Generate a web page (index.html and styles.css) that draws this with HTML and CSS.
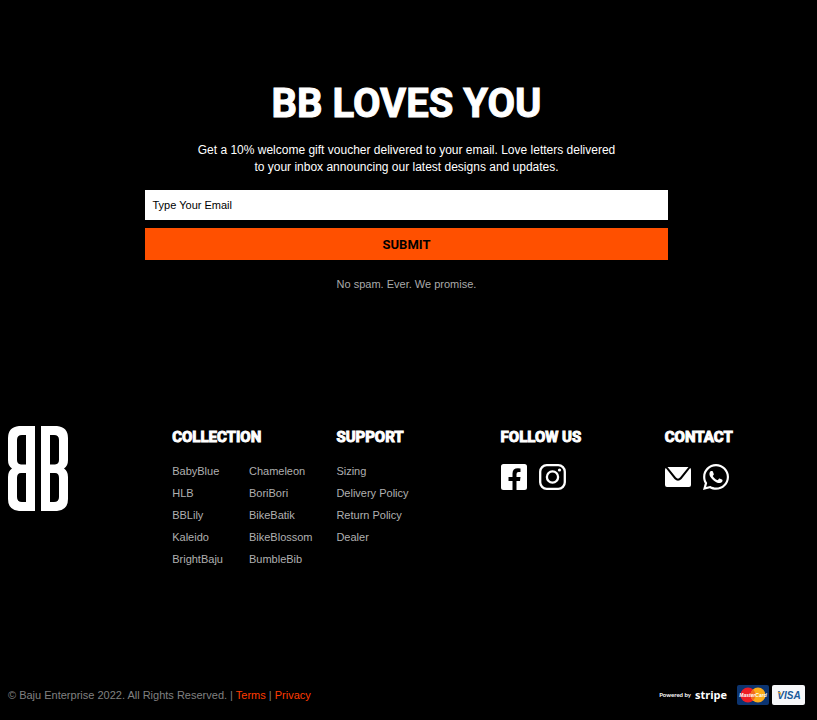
FILE: index.html
```html
<!DOCTYPE html>
<html lang="en">
<head>
<meta charset="utf-8">
<meta name="viewport" content="width=device-width, initial-scale=1">
<title>BB Loves You</title>
<link rel="stylesheet" href="styles.css">
</head>
<body>
<main class="newsletter">
  <h1 class="newsletter-title">BB LOVES YOU</h1>
  <p class="newsletter-lead">Get a 10% welcome gift voucher delivered to your email. Love letters delivered to your inbox announcing our latest designs and updates.</p>
  <form class="newsletter-form">
    <input class="field" type="email" placeholder="Type Your Email" aria-label="Type Your Email">
    <button class="submit" type="submit">SUBMIT</button>
  </form>
  <p class="newsletter-note">No spam. Ever. We promise.</p>
</main>
<footer class="footer">
  <div class="columns">
    <a class="logo" href="#" aria-label="BB">
      <svg width="60" height="85" viewBox="0 0 60 85" fill="#fff" fill-rule="evenodd">
        <path d="M27 0H11Q0 1 0 12V34Q0 40 4 42.500Q0 45 0 51V73Q0 84 11 85H27ZM18 9V38.500H13Q9 38 9 34V14Q9 9 14 9ZM18 47V76H14Q9 76 9 71V52Q9 47 13 47Z"/>
        <path d="M33 0H49Q60 1 60 12V34Q60 40 56 42.500Q60 45 60 51V73Q60 84 49 85H33ZM42 9V38.500H47Q51 38 51 34V14Q51 9 46 9ZM42 47V76H46Q51 76 51 71V52Q51 47 47 47Z"/>
      </svg>
    </a>
    <section>
      <h2 class="heading">COLLECTION</h2>
      <div class="link-groups">
        <ul class="links">
          <li><a href="#">BabyBlue</a></li>
          <li><a href="#">HLB</a></li>
          <li><a href="#">BBLily</a></li>
          <li><a href="#">Kaleido</a></li>
          <li><a href="#">BrightBaju</a></li>
        </ul>
        <ul class="links">
          <li><a href="#">Chameleon</a></li>
          <li><a href="#">BoriBori</a></li>
          <li><a href="#">BikeBatik</a></li>
          <li><a href="#">BikeBlossom</a></li>
          <li><a href="#">BumbleBib</a></li>
        </ul>
      </div>
    </section>
    <section>
      <h2 class="heading">SUPPORT</h2>
      <ul class="links">
        <li><a href="#">Sizing</a></li>
        <li><a href="#">Delivery Policy</a></li>
        <li><a href="#">Return Policy</a></li>
        <li><a href="#">Dealer</a></li>
      </ul>
    </section>
    <section>
      <h2 class="heading">FOLLOW US</h2>
      <div class="icons">
        <a href="#" aria-label="Facebook">
          <svg width="26" height="26" viewBox="0 0 26 26"><path fill="#fff" d="M2.500 0H23.500Q26 0 26 2.500V23.500Q26 26 23.500 26H15.500V17H19L19.500 13H15.500V10Q15.500 8 17.500 8H19.500V4.500Q18.500 4.200 17 4.200Q11.500 4.200 11.500 9.500V13H7.500V17H11.500V26H2.500Q0 26 0 23.500V2.500Q0 0 2.500 0Z"/></svg>
        </a>
        <a href="#" aria-label="Instagram">
          <svg width="27" height="26" viewBox="0 0 27 26" fill="none" stroke="#fff" stroke-width="2.300"><rect x="1.200" y="1.200" width="24.600" height="23.600" rx="6.500"/><circle cx="13.500" cy="13" r="5.600"/><circle cx="20.500" cy="6" r="1.600" fill="#fff" stroke="none"/></svg>
        </a>
      </div>
    </section>
    <section>
      <h2 class="heading">CONTACT</h2>
      <div class="icons">
        <a href="#" aria-label="Email">
          <svg width="26" height="26" viewBox="0 0 26 26" fill="#fff"><path d="M2.500 3H23.500L15 13.500Q13 15.800 11 13.500ZM.8 4L9.500 15Q13 18.600 16.500 15L25.200 4Q26 4.500 26 6V21Q26 23 24 23H2Q0 23 0 21V6Q0 4.500 .8 4Z"/></svg>
        </a>
        <a href="#" aria-label="WhatsApp">
          <svg width="26" height="26" viewBox="0 0 448 448"><path fill="#fff" d="M380.900 65.100C339 23.100 283.200 0 223.900 0 101.500 0 1.900 99.600 1.900 222c0 39.100 10.200 77.300 29.600 111L0 448l117.700-30.900c32.400 17.700 68.900 27 106.100 27h.1c122.300 0 224.100-99.600 224.100-222 0-59.300-25.200-115-67.100-157zM223.900 406.700c-33.200 0-65.700-8.900-94-25.700l-6.700-4-69.800 18.300L72 327.200l-4.400-7C49.100 290.800 39.400 256.900 39.400 222c0-101.700 82.800-184.500 184.600-184.500 49.300 0 95.600 19.200 130.400 54.100 34.800 34.900 56.200 81.200 56.100 130.500 0 101.800-84.900 184.600-186.600 184.600zm101.200-138.200c-5.500-2.800-32.800-16.200-37.900-18-5.100-1.900-8.800-2.800-12.500 2.800-3.700 5.600-14.300 18-17.600 21.800-3.200 3.700-6.500 4.200-12 1.400-32.600-16.300-54-29.100-75.500-66-5.700-9.800 5.700-9.100 16.300-30.300 1.800-3.700.9-6.900-.5-9.700-1.400-2.800-12.500-30.100-17.100-41.200-4.500-10.800-9.100-9.300-12.500-9.500-3.200-.2-6.900-.2-10.600-.2-3.700 0-9.700 1.400-14.800 6.900-5.100 5.600-19.400 19-19.400 46.300 0 27.300 19.900 53.700 22.600 57.400 2.800 3.700 39.100 59.700 94.800 83.800 35.200 15.200 49 16.500 66.600 13.900 10.700-1.600 32.800-13.400 37.400-26.400 4.600-13 4.600-24.100 3.200-26.400-1.300-2.500-5-3.900-10.500-6.600z"/></svg>
        </a>
      </div>
    </section>
  </div>
  <div class="bottom">
    <p class="legal">© Baju Enterprise 2022. All Rights Reserved. | <a href="#">Terms</a> | <a href="#">Privacy</a></p>
    <div class="payments">
      <span class="powered">Powered by</span>
      <span class="stripe">stripe</span>
      <svg class="card" width="32" height="20" viewBox="0 0 32 20" role="img" aria-label="MasterCard">
        <rect width="32" height="20" rx="2" fill="#0c3470"/>
        <circle cx="11" cy="10" r="7.500" fill="#ed1c24"/>
        <circle cx="21" cy="10" r="7.500" fill="#fbab18"/>
        <path d="M16 4.400A7.500 7.500 0 0 1 16 15.600A7.500 7.500 0 0 1 16 4.400Z" fill="#f26a21"/>
        <text class="mc-text" x="16" y="12" text-anchor="middle">MasterCard</text>
      </svg>
      <svg class="card" width="33" height="20" viewBox="0 0 33 20" role="img" aria-label="Visa">
        <rect width="33" height="20" rx="2" fill="#f6f7f9"/>
        <text class="visa-text" x="17" y="14" text-anchor="middle">VISA</text>
        <path d="M5.500 7H8.500L9.500 11Q8 8 5.500 7Z" fill="#f2a71b"/>
      </svg>
    </div>
  </div>
</footer>
</body>
</html>
```
FILE: styles.css
```css
* { box-sizing: border-box; }

body {
  margin: 0;
  min-height: 100vh;
  display: flex;
  flex-direction: column;
  background: #000;
  color: #fff;
  font-family: "Liberation Sans", Arial, sans-serif;
  font-size: 11px;
  line-height: 16px;
}

h1, h2, p, ul { margin: 0; padding: 0; }
ul { list-style: none; }
a { color: inherit; text-decoration: none; }
svg { display: block; }

.newsletter {
  padding: 76px 12px 0 8px;
  text-align: center;
}

.newsletter-title,
.heading,
.submit {
  font-family: Roboto, "Liberation Sans", sans-serif;
  font-weight: 700;
}

.newsletter-title {
  font-size: 40px;
  line-height: 56px;
  -webkit-text-stroke: 1px #fff;
}

.newsletter-lead {
  max-width: 425px;
  margin: 10px auto 0;
  font-size: 12px;
  line-height: 17px;
}

.newsletter-form {
  display: flex;
  flex-direction: column;
  gap: 8px;
  width: 65.5%;
  margin: 14px auto 0;
}

.field {
  height: 30px;
  padding: 0 7px;
  border: 0;
  border-radius: 0;
  background: #fff;
  color: #000;
  font: inherit;
}

.field::placeholder { color: #000; opacity: 1; }

.submit {
  height: 32px;
  padding: 0;
  border: 0;
  background: #ff5000;
  color: #000;
  font-size: 13px;
}

.newsletter-note {
  margin-top: 16px;
  color: #aaa;
}

.footer {
  flex: 1;
  display: flex;
  flex-direction: column;
  justify-content: space-between;
  padding: 134px 12px 15px 8px;
}

.columns {
  display: grid;
  grid-template-columns: repeat(5, minmax(0, 1fr));
  gap: 24px;
}

.heading {
  font-size: 15px;
  line-height: 22px;
  -webkit-text-stroke: 1px #fff;
}

.link-groups { display: flex; gap: 26px; }

.links { margin-top: 12px; color: #b0b0b0; line-height: 22px; white-space: nowrap; }

.icons { display: flex; gap: 12px; margin-top: 16px; }

.bottom {
  display: flex;
  align-items: center;
  justify-content: space-between;
}

.legal { color: #808080; }
.legal a { color: #ff3c00; }

.payments { display: flex; align-items: center; }

.powered {
  font-family: Lato, sans-serif;
  font-size: 6px;
  font-weight: 700;
}

.stripe {
  margin: 0 10px 0 4px;
  font-family: "Open Sans", sans-serif;
  font-size: 11px;
  font-weight: 700;
}

.card + .card { margin-left: 3px; }

.mc-text {
  fill: #fff;
  font: italic 700 5px "Liberation Sans", sans-serif;
}

.visa-text {
  fill: #1a5a9a;
  font: italic 700 10px "Liberation Sans", sans-serif;
}
```
